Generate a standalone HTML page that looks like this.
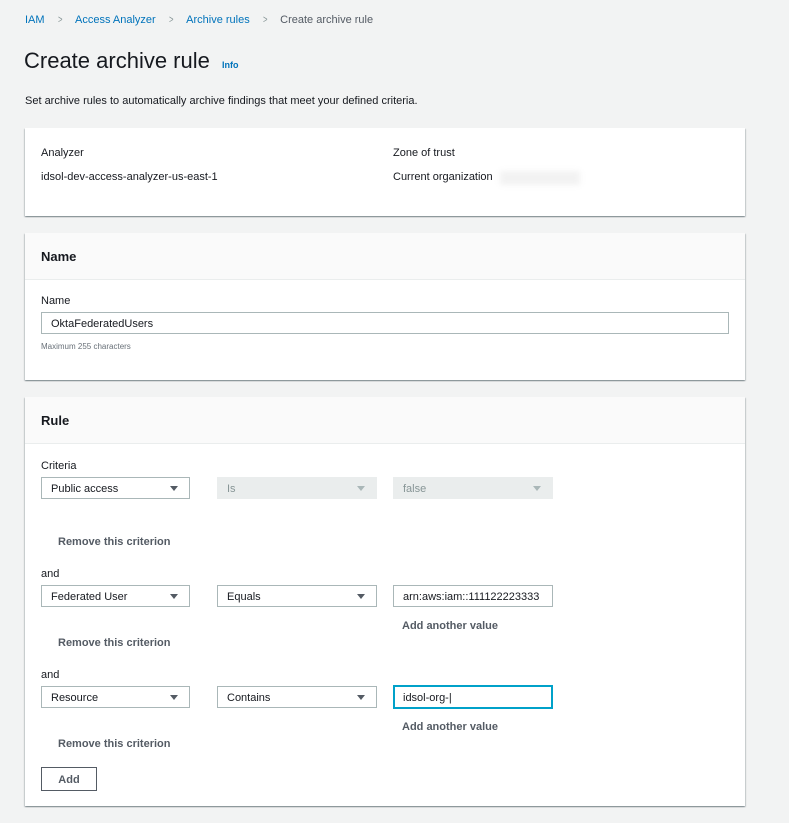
<!DOCTYPE html>
<html><head><style>
body{margin:0;width:789px;height:823px;background:#f2f3f3;font-family:"Liberation Sans",Arial,sans-serif;color:#16191f;position:relative;overflow:hidden;font-size:11px}
.a{position:absolute;white-space:nowrap}
.link{color:#0073bb}
.card{position:absolute;left:25px;width:720px;background:#fff;box-shadow:0 1px 1px rgba(0,28,36,.3),1px 1px 1px rgba(0,28,36,.15),-1px 1px 1px rgba(0,28,36,.15)}
.hdr{position:absolute;left:0;top:0;width:720px;height:46px;background:#fafafa;border-bottom:1px solid #eaeded;font-weight:bold;font-size:13px;line-height:48px;text-indent:16px}
.sel{position:absolute;height:22px;border:1px solid #aab7b8;background:#fff;box-sizing:border-box;line-height:23px;padding-left:9px;font-size:11px}
.sel.dis{background:#eaeded;border-color:#eaeded;color:#879596}
.tri{position:absolute;right:11px;top:8px;width:0;height:0;border-left:4px solid transparent;border-right:4px solid transparent;border-top:5px solid #545b64}
.dis .tri{border-top-color:#aab7b8}
.b{font-weight:bold;color:#545b64}
.sep{color:#879596;margin:0 12px;display:inline-block;transform:scaleX(.7)}
</style></head><body>
<div class="a" style="left:25px;top:14px"><span class="link">IAM</span><span class="sep">&gt;</span><span class="link">Access Analyzer</span><span class="sep">&gt;</span><span class="link">Archive rules</span><span class="sep">&gt;</span><span style="color:#545b64">Create archive rule</span></div>
<div class="a" style="left:24px;top:48px;font-size:22px">Create archive rule</div>
<div class="a link" style="left:222px;top:60px;font-size:9px;font-weight:bold">Info</div>
<div class="a" style="left:25px;top:95px">Set archive rules to automatically archive findings that meet your defined criteria.</div>

<div class="card" style="top:128px;height:88px">
<div class="a" style="left:16px;top:19px">Analyzer</div>
<div class="a" style="left:16px;top:43px">idsol-dev-access-analyzer-us-east-1</div>
<div class="a" style="left:368px;top:19px">Zone of trust</div>
<div class="a" style="left:368px;top:43px">Current organization</div>
<div class="a" style="left:475px;top:43px;width:80px;height:14px;background:#f2f2f2;filter:blur(3px)"></div>
</div>

<div class="card" style="top:233px;height:147px">
<div class="hdr">Name</div>
<div class="a" style="left:16px;top:62px">Name</div>
<div class="sel" style="left:16px;top:79px;width:688px">OktaFederatedUsers</div>
<div class="a" style="left:16px;top:109px;font-size:8px;color:#687078">Maximum 255 characters</div>
</div>

<div class="card" style="top:397px;height:409px">
<div class="hdr">Rule</div>
<div class="a" style="left:16px;top:63px">Criteria</div>
<div class="sel" style="left:16px;top:80px;width:149px">Public access<div class="tri"></div></div>
<div class="sel dis" style="left:192px;top:80px;width:160px">Is<div class="tri"></div></div>
<div class="sel dis" style="left:368px;top:80px;width:160px">false<div class="tri"></div></div>
<div class="a b" style="left:33px;top:139px">Remove this criterion</div>
<div class="a" style="left:16px;top:171px">and</div>
<div class="sel" style="left:16px;top:188px;width:149px">Federated User<div class="tri"></div></div>
<div class="sel" style="left:192px;top:188px;width:160px">Equals<div class="tri"></div></div>
<div class="sel" style="left:368px;top:188px;width:160px;overflow:hidden">arn:aws:iam::111122223333</div>
<div class="a b" style="left:377px;top:223px">Add another value</div>
<div class="a b" style="left:33px;top:240px">Remove this criterion</div>
<div class="a" style="left:16px;top:272px">and</div>
<div class="sel" style="left:16px;top:289px;width:149px">Resource<div class="tri"></div></div>
<div class="sel" style="left:192px;top:289px;width:160px">Contains<div class="tri"></div></div>
<div class="sel" style="left:368px;top:288px;width:160px;height:24px;border:2px solid #00a1c9;padding-left:8px">idsol-org-|</div>
<div class="a b" style="left:377px;top:324px">Add another value</div>
<div class="a b" style="left:33px;top:341px">Remove this criterion</div>
<div class="sel b" style="left:16px;top:370px;width:56px;height:24px;border-color:#545b64;padding-left:0;text-align:center;line-height:24px">Add</div>
</div>
</body></html>
